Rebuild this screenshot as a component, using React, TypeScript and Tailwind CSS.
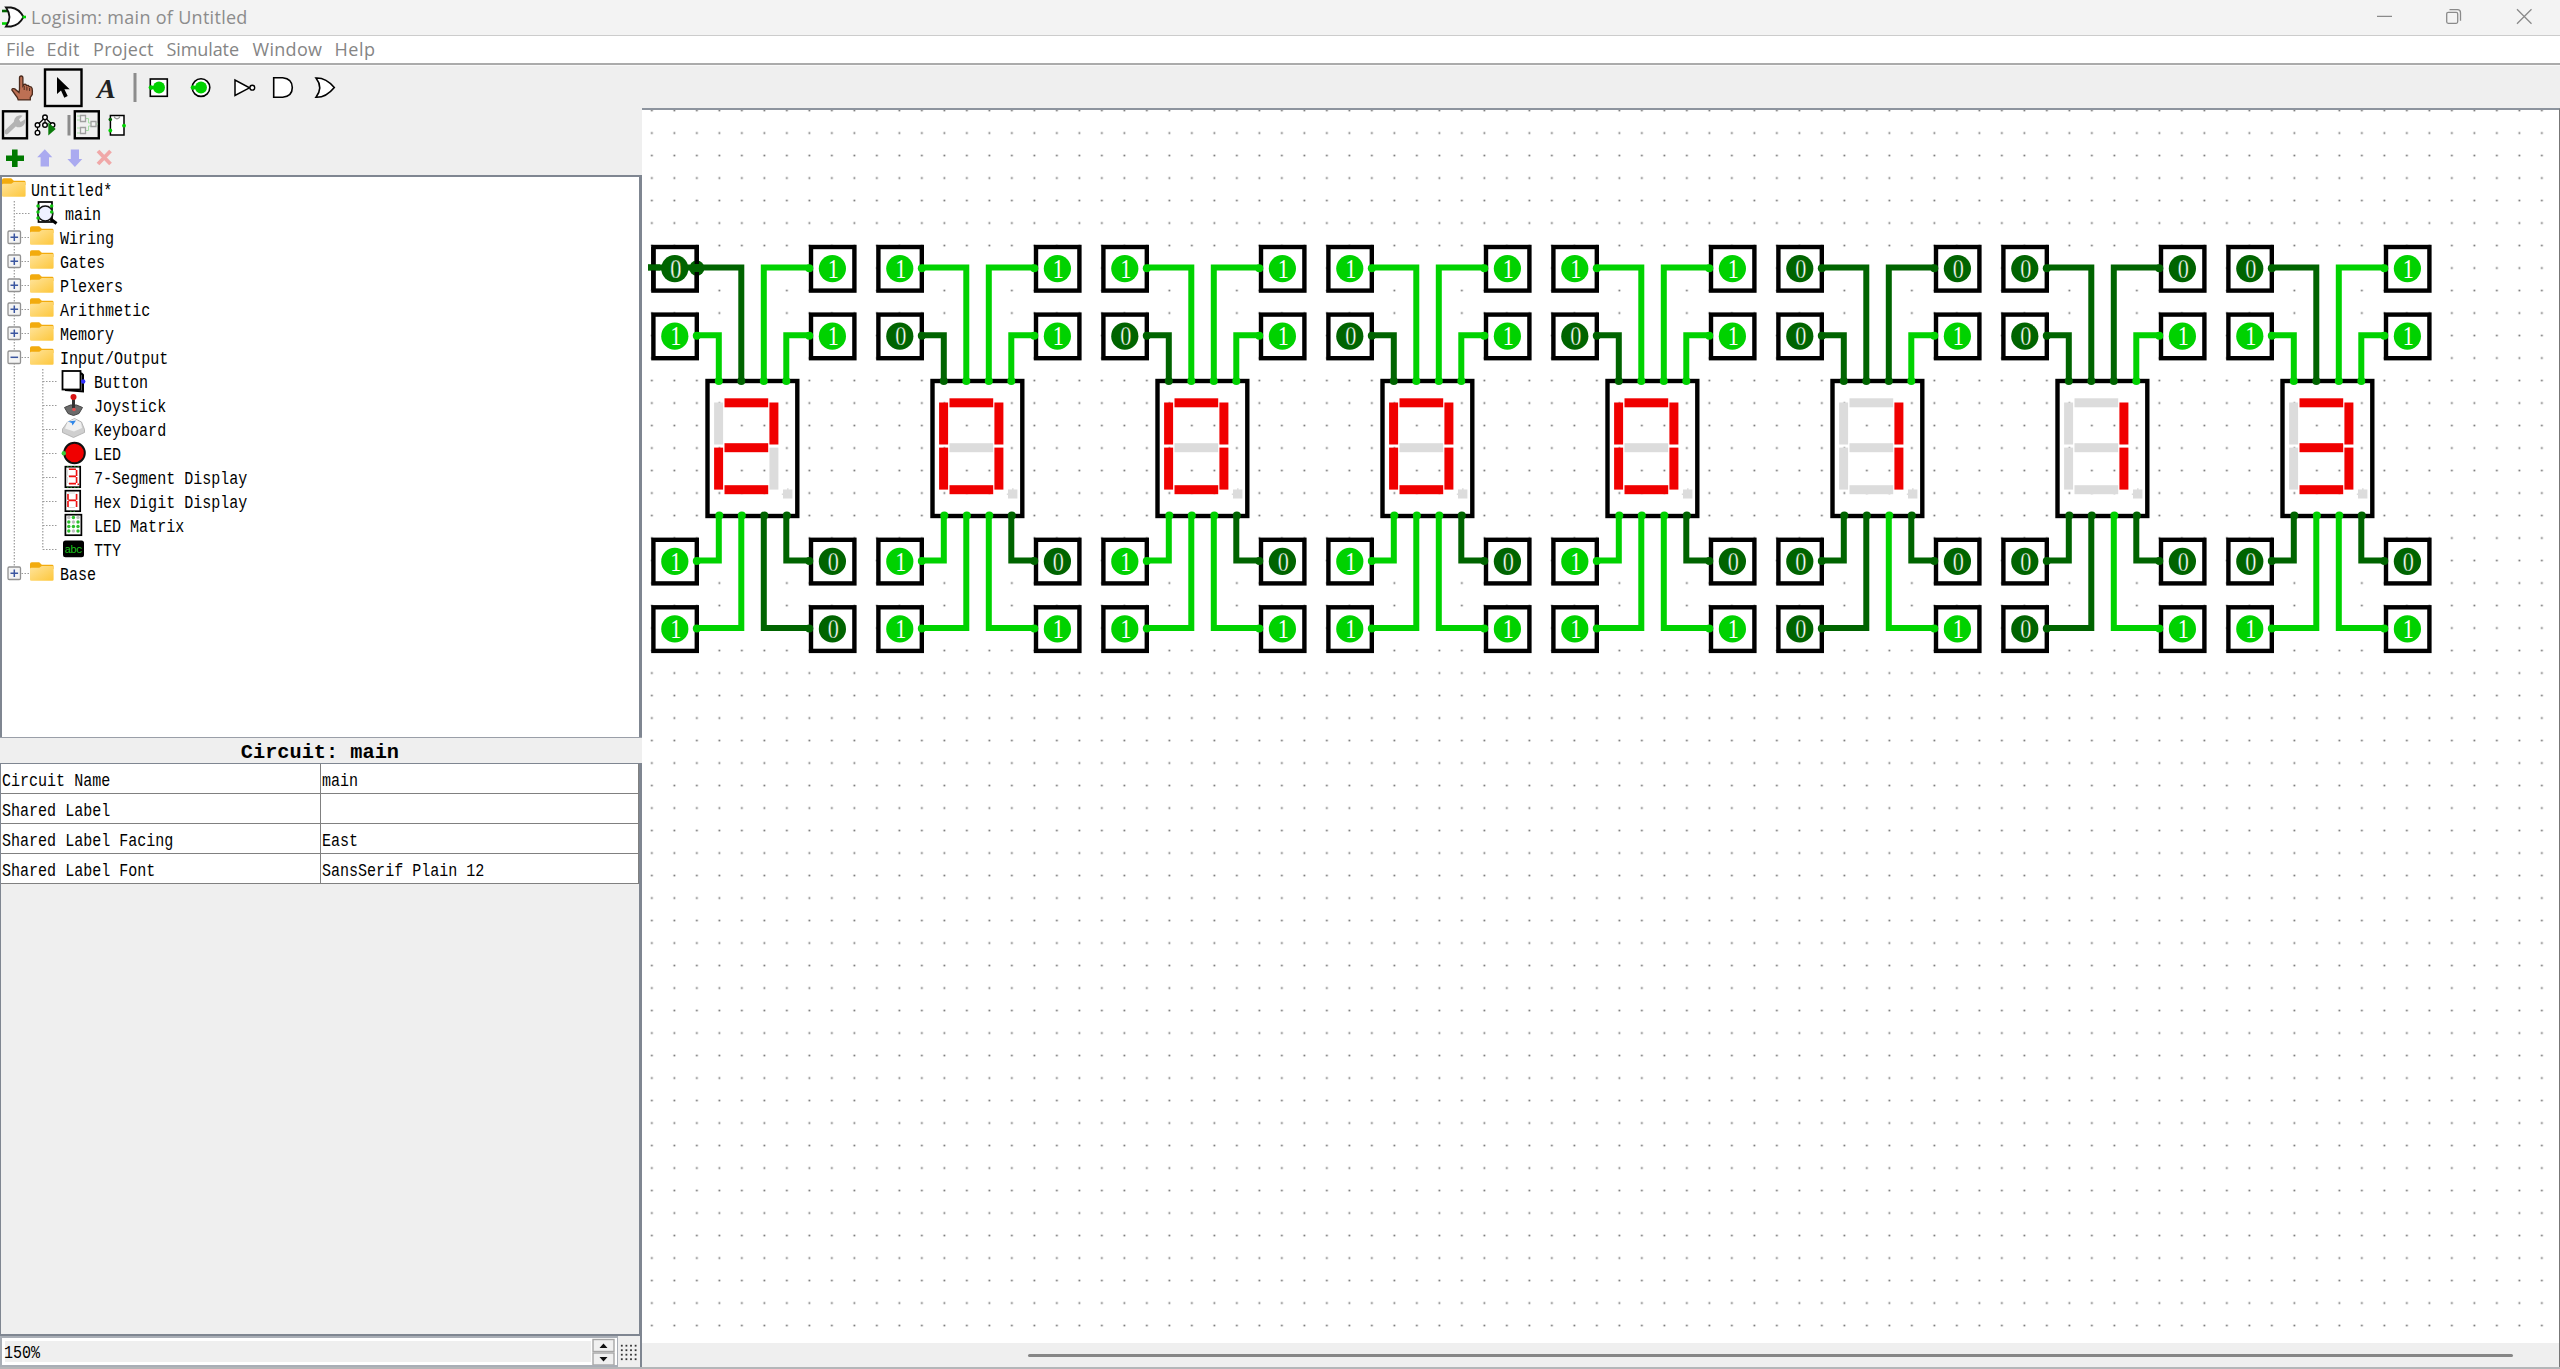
import React from "react";

type Bits = [number, number, number, number];
interface DigitData {
  left: Bits;
  right: Bits;
}

const ZERO: DigitData = { left: [1, 0, 1, 1], right: [1, 1, 0, 1] };
const ONE: DigitData = { left: [0, 0, 0, 0], right: [0, 1, 0, 1] };
const DIGITS: DigitData[] = [
  { left: [0, 1, 1, 1], right: [1, 1, 0, 0] },
  ZERO,
  ZERO,
  ZERO,
  ZERO,
  ONE,
  ONE,
  { left: [0, 1, 0, 1], right: [1, 1, 0, 1] },
];

const HIGH = "#00d200";
const LOW = "#006400";
const level = (v: number) => (v ? HIGH : LOW);
const ROWS = [268.6, 336.2, 561.4, 628.9];

function Mono({ children, className = "" }: { children: React.ReactNode; className?: string }) {
  return (
    <span
      className={`inline-block origin-left scale-x-[0.835] whitespace-pre font-['Liberation_Mono',monospace] text-[18px] leading-6 text-black ${className}`}
    >
      {children}
    </span>
  );
}

/* ---------- circuit canvas ---------- */

function PinValue({ x, y, value }: { x: number; y: number; value: number }) {
  return (
    <text
      transform={`translate(${x + 0.9} ${y + 9.2}) scale(0.84 1)`}
      textAnchor="middle"
      fontFamily="Liberation Serif"
      fontSize="26.5"
      fill="#fff"
      stroke={value ? "none" : LOW}
      strokeWidth="0.4"
    >
      {value}
    </text>
  );
}

function Pin({ x, y, value, portX, port = true }: { x: number; y: number; value: number; portX: number; port?: boolean }) {
  return (
    <g>
      <rect x={x - 21.4} y={y - 21.6} width="43.4" height="43.6" fill="#fff" stroke="#000" strokeWidth="4.4" />
      <circle cx={x} cy={y} r="13.6" fill={level(value)} />
      <PinValue x={x} y={y} value={value} />
      {port && <circle cx={portX} cy={y - 0.4} r="4" fill={level(value)} />}
    </g>
  );
}

function Wire({ d, value }: { d: string; value: number }) {
  return <path d={d} fill="none" stroke={level(value)} strokeWidth="6" />;
}

function Digit({ data, x, first }: { data: DigitData; x: number; first: boolean }) {
  const [f, g, e, d] = data.left;
  const [a, b, dp, c] = data.right;
  const seg = (v: number) => (v ? "#f00000" : "#dcdcdc");
  const tops = [
    [718.8, g],
    [741.3, f],
    [763.8, a],
    [786.3, b],
  ];
  const bottoms = [
    [719.3, e],
    [741.8, d],
    [764.3, c],
    [786.8, dp],
  ];
  return (
    <g transform={`translate(${x} 0)`}>
      {data.left.map((v, i) => (
        <Pin key={`l${i}`} x={674.8} y={ROWS[i]} value={v} portX={696.8} port={!(first && i === 0)} />
      ))}
      {data.right.map((v, i) => (
        <Pin key={`r${i}`} x={832.4} y={ROWS[i]} value={v} portX={809.3} />
      ))}
      <rect x="707.5" y="381" width="89.8" height="135" fill="none" stroke="#000" strokeWidth="4.4" />
      <rect x="724.5" y="398.3" width="43.7" height="9" fill={seg(a)} />
      <rect x="724.5" y="443.2" width="43.7" height="9" fill={seg(g)} />
      <rect x="724.5" y="485.2" width="43.7" height="9" fill={seg(d)} />
      <rect x="714.1" y="402.5" width="9" height="42" fill={seg(f)} />
      <rect x="714.1" y="447.6" width="9" height="42" fill={seg(e)} />
      <rect x="769.4" y="402.5" width="9" height="42" fill={seg(b)} />
      <rect x="769.4" y="447.6" width="9" height="42" fill={seg(c)} />
      <path d="M783 489.6h4v-1.4h1.6v1.4h3.8v9H783v-3.6h-1.2v-1.6h1.2z" fill={seg(dp)} />
      <Wire d="M696.8 267.6H741.3V381" value={f} />
      <Wire d="M696.8 335.2H718.8V381" value={g} />
      <Wire d="M809.3 267.6H763.8V381" value={a} />
      <Wire d="M809.3 335.2H786.3V381" value={b} />
      <Wire d="M696.8 560.4H718.8V516" value={e} />
      <Wire d="M696.8 627.9H741.3V516" value={d} />
      <Wire d="M809.3 560.4H786.3V516" value={dp} />
      <Wire d="M809.3 627.9H763.8V516" value={c} />
      {tops.map(([px, v]) => (
        <circle key={px} cx={px} cy="381" r="4" fill={level(v)} />
      ))}
      {bottoms.map(([px, v]) => (
        <circle key={px} cx={px} cy="515.6" r="4" fill={level(v)} />
      ))}
      {first && (
        <g>
          <path d="M648 267.4H690" stroke={LOW} strokeWidth="6" />
          <circle cx="696.8" cy="268.2" r="7.6" fill={LOW} />
          <path d="M653.4 247V290M696.8 247V264M696.8 272V290" stroke="#000" strokeWidth="4.4" />
          <path d="M648 267.4H660" stroke={LOW} strokeWidth="6" />
          <PinValue x={674.8} y={268.6} value={0} />
        </g>
      )}
    </g>
  );
}

function Canvas() {
  return (
    <svg className="block h-[1233px] w-full bg-white" viewBox="642 110 1917 1233" preserveAspectRatio="xMinYMin slice">
      <defs>
        <pattern id="grid" x="640.6" y="99.3" width="22.5" height="22.5" patternUnits="userSpaceOnUse">
          <rect x="10.4" y="10.4" width="1.7" height="1.7" fill="#6c6c6c" />
        </pattern>
      </defs>
      <rect x="642" y="110" width="1917" height="1233" fill="url(#grid)" />
      {DIGITS.map((d, i) => (
        <Digit key={i} data={d} x={i * 225} first={i === 0} />
      ))}
    </svg>
  );
}

/* ---------- toolbar ---------- */

function Art({ x, y, w, h, children }: { x: number; y: number; w: number; h: number; children: React.ReactNode }) {
  return (
    <svg className="block shrink-0" width={w} height={h} viewBox={`${x} ${y} ${w} ${h}`} fill="none">
      {children}
    </svg>
  );
}

function MainToolbar() {
  return (
    <div className="flex h-[42px] w-full bg-[#efefef]">
      <Art x={0} y={66} w={43} h={42}>
        <path
          d="M19.5 89V78q0-2 1.7-2t1.7 2v8l1.2-1.6q2-.6 2.4 1.2 2-.8 2.6 1 2.4-.4 3 1.8.6 3 .2 6l-2 3v2.5H18.2q-.4-2.4-2.4-4.4l-4-5.6q.6-2 3-1l4.2 3.5z"
          fill="#bd7054"
          stroke="#4a2a1c"
          strokeWidth="1.3"
        />
        <path d="M24.2 86v4M26.9 87v3.5M29.6 88v3" stroke="#4a2a1c" />
      </Art>
      <Art x={43} y={66} w={41} h={42}>
        <rect x="45" y="69.5" width="36.5" height="36.5" stroke="#000" strokeWidth="2.4" />
        <path d="M57 77v17l4-3.5 3.3 7.3 3.4-1.7-3.3-6.9h5.3z" fill="#000" />
      </Art>
      <Art x={84} y={66} w={46} h={42}>
        <text x="97" y="98" fontFamily="Liberation Serif" fontWeight="bold" fontStyle="italic" fontSize="28" fill="#222">
          A
        </text>
      </Art>
      <Art x={130} y={66} w={14} h={42}>
        <rect x="133.5" y="73" width="3" height="29" fill="#8c8c8c" />
      </Art>
      <Art x={144} y={66} w={41} h={42}>
        <rect x="150.3" y="79" width="17" height="17.3" fill="#fff" stroke="#000" strokeWidth="1.6" />
        <circle cx="159" cy="87.6" r="6" fill={HIGH} />
        <circle cx="151" cy="87.6" r="2.4" fill={HIGH} />
        <path d="M151 87.6h8" stroke={HIGH} strokeWidth="3" />
      </Art>
      <Art x={185} y={66} w={41} h={42}>
        <circle cx="201" cy="87.6" r="8.8" fill="#fff" stroke="#000" strokeWidth="1.6" />
        <circle cx="201" cy="87.6" r="6" fill={HIGH} />
        <circle cx="193" cy="87.6" r="2.4" fill={HIGH} />
        <path d="M193 87.6h8" stroke={HIGH} strokeWidth="3" />
      </Art>
      <Art x={226} y={66} w={41} h={42}>
        <path d="M235 80v15.5l14.5-7.7z" fill="#fff" stroke="#000" strokeWidth="1.5" />
        <circle cx="252.3" cy="87.7" r="2.4" fill="#fff" stroke="#000" strokeWidth="1.4" />
      </Art>
      <Art x={267} y={66} w={41} h={42}>
        <path d="M273.7 77.8h9q9.6 1 9.6 9.8t-9.6 9.7h-9z" fill="#fff" stroke="#000" strokeWidth="1.6" />
      </Art>
      <Art x={308} y={66} w={41} h={42}>
        <path d="M316 78q10-.4 18.3 9.5-8.3 10.2-18.3 9.8 7.4-9.8 0-19.3z" fill="#fff" stroke="#000" strokeWidth="1.6" />
      </Art>
    </div>
  );
}

function ExplorerToolbar() {
  return (
    <div className="flex h-[34px] bg-[#efefef]">
      <Art x={0} y={108} w={31} h={34}>
        <rect x="3" y="111.3" width="24" height="27" stroke="#000" strokeWidth="2.4" />
        <path d="M6.5 132l9-8.5" stroke="#b4b4b4" strokeWidth="4.5" strokeLinecap="round" />
        <path
          d="M14 124q-1-7 5-8.5 2-.5 3.5.3l-3.5 3.4 1.6 2.8 4.6-2.7q.4 5.7-3.6 7.5-3 1-5 .2z"
          fill="#b4b4b4"
        />
      </Art>
      <Art x={31} y={108} w={33} h={34}>
        <path d="M45 117.5L37.5 125v8M45 117.5v7M45 117.5l7.5 7.5" stroke="#000" strokeWidth="1.2" />
        {[
          [45, 117.3],
          [45, 125],
          [37.5, 125],
          [37.5, 132.7],
          [52.5, 125],
        ].map(([cx, cy]) => (
          <circle key={`${cx}-${cy}`} cx={cx} cy={cy} r="2.3" fill="#fff" stroke="#000" strokeWidth="1.4" />
        ))}
        <path d="M48.3 122.5v13l7.4-6.5z" fill="#0a7a0a" />
      </Art>
      <Art x={64} y={108} w={9} h={34}>
        <rect x="67.5" y="115" width="3" height="20.5" fill="#8c8c8c" />
      </Art>
      <Art x={73} y={108} w={29} h={34}>
        <rect x="74.8" y="111.3" width="24" height="27" stroke="#000" strokeWidth="2.4" />
        <path d="M77 116h4M77 120h4M77 128h4M77 133h4M86 118.5h2.5v4.5h3M86 130.5h2.5v-4.5h3M96 124h2" stroke="#a5e0a5" />
        <path d="M80.5 115.5h5v6h-5zM80.5 127.5h5v6h-5zM91 121.5h5v5h-5z" fill="#f4f4f4" stroke="#a0a0a0" strokeWidth="1.3" />
      </Art>
      <Art x={102} y={108} w={30} h={34}>
        <rect x="110.4" y="115.5" width="13.6" height="19.5" fill="#fff" stroke="#000" strokeWidth="1.5" />
        <path d="M114.5 116v1.5q2.5 2.5 5 0V116" stroke="#999" strokeWidth="1.2" />
        <circle cx="110.3" cy="119.5" r="1.8" fill="#006400" />
        <circle cx="110.3" cy="130.5" r="1.9" fill={HIGH} />
        <circle cx="124" cy="125.7" r="1.9" fill={HIGH} />
      </Art>
    </div>
  );
}

function EditToolbar() {
  return (
    <div className="flex h-[33px] bg-[#efefef]">
      <Art x={0} y={142} w={30} h={32}>
        <path d="M12 149.5h5.6v6H24v5.4h-6.4v6H12v-6H6v-5.4h6z" fill="#007a00" />
      </Art>
      <Art x={30} y={142} w={30} h={32}>
        <path d="M44.8 149.3l7.5 8H49v9.3h-8.4v-9.3h-3.4z" fill="#aaaaf0" />
      </Art>
      <Art x={60} y={142} w={30} h={32}>
        <path d="M74.9 167l7.4-8H79v-9.5h-8.2v9.5h-3.4z" fill="#aaaaf0" />
      </Art>
      <Art x={90} y={142} w={30} h={32}>
        <path d="M98 151l12.5 13M110.5 151L98 164" stroke="#f0a8a8" strokeWidth="3.8" />
      </Art>
    </div>
  );
}

/* ---------- explorer tree ---------- */

function Folder({ x }: { x: number }) {
  return (
    <g transform={`translate(${x} 0)`}>
      <path d="M0 7V3q0-1.8 1.8-1.8h7.4l2.6 2.6h10.4q1.3 0 1.3 1.3V8H0z" fill="#f2ab0e" />
      <path d="M0 8q0-1.3 1.3-1.3h8l2.5-1.8h10.5q1.3 0 1.3 1.3v12.3q0 1.2-1.3 1.2H1.3Q0 19.7 0 18.5z" fill="url(#folderFill)" />
    </g>
  );
}

const DOTS = { stroke: "#9a9a9a", strokeWidth: 1.2, strokeDasharray: "1.5 1.5" };

function Expander({ open }: { open?: boolean }) {
  return (
    <g>
      <rect x="8" y="6" width="12.5" height="12.5" rx="1.2" fill="#f4f4f4" stroke="#919191" strokeWidth="1.3" />
      <path d={open ? "M10.5 12.3h7.6" : "M10.5 12.3h7.6M14.3 8.5v7.6"} stroke="#3b56a0" strokeWidth="1.5" />
    </g>
  );
}

const SEG_PATHS = (
  <path d="M68 4h7M68 11h7M68 18.5h7M67.3 4.5v6M67.3 12v6M76.3 4.5v6M76.3 12v6" stroke="#d8d8d8" strokeWidth="1.2" />
);

const toolArt: Record<string, React.ReactNode> = {
  Button: (
    <g>
      <path d="M65 21l18 1.5V6l-2-2" fill="#999" stroke="#000" strokeWidth="2" />
      <rect x="62.5" y="2" width="18" height="18.5" fill="#fff" stroke="#000" strokeWidth="1.8" />
      <circle cx="83.2" cy="12.5" r="2.2" fill="#3333ff" />
    </g>
  ),
  Joystick: (
    <g>
      <path d="M64.5 14.5l6-2.5h6l6 2.5-3.5 6-5.5 2-5.5-2z" fill="#6b6b6b" stroke="#444" />
      <path d="M72 5h3v10h-3z" fill="#333" />
      <circle cx="73.5" cy="4" r="3" fill="#d81414" />
      <circle cx="74" cy="16.5" r="1.8" fill="#e05050" />
    </g>
  ),
  Keyboard: (
    <g>
      <path d="M62.5 12l5-7 7-3.5 7 3.5 3 7.5v3l-11 5-11-5z" fill="#cfcfcf" stroke="#aaa" strokeWidth=".8" />
      <path d="M67.5 5l7-3 6.5 3.5 1 5.5-8 3.5-9-3z" fill="#f0f0f0" />
      <path d="M68 4.5l8-1-3.5 5-.8-2.5z" fill="#2f86e8" />
    </g>
  ),
  LED: (
    <g>
      <circle cx="74.5" cy="12" r="10.3" fill="#f00000" stroke="#111" strokeWidth="2" />
      <circle cx="63.8" cy="12.3" r="2.2" fill="#3ccc3c" />
    </g>
  ),
  "7-Segment Display": (
    <g>
      <rect x="65.4" y="1.7" width="14.8" height="20.5" fill="#fff" stroke="#000" strokeWidth="1.7" />
      {SEG_PATHS}
      <path d="M69 4.2h7M69 11.4h7M69 18.6h7M76.6 5v6M76.6 12v6" stroke="#f01010" strokeWidth="1.6" />
      <path d="M67 1.5h12M67 22.5h12" stroke="#1a7a1a" strokeDasharray="1.5 2" />
      <rect x="77.5" y="18.5" width="1.6" height="1.6" fill="#f01010" />
    </g>
  ),
  "Hex Digit Display": (
    <g>
      <rect x="65.4" y="1.7" width="14.8" height="20.5" fill="#fff" stroke="#000" strokeWidth="1.7" />
      {SEG_PATHS}
      <path d="M68.5 11.4h7.6M68 5v5.7M68 12v6M76.6 5v5.7M76.6 12v6" stroke="#f01010" strokeWidth="1.6" />
      <path d="M70 22.5h6" stroke="#1a7a1a" strokeDasharray="1.5 2" />
    </g>
  ),
  "LED Matrix": (
    <g>
      <rect x="65.4" y="1.7" width="16" height="20.5" fill="#fff" stroke="#000" strokeWidth="1.7" />
      {[4.5, 9, 13.5, 18].map((y, r) =>
        [68.8, 73.4, 78].map((x, c) => (
          <circle
            key={`${x}${y}`}
            cx={x}
            cy={y}
            r="1.7"
            fill={(r === 0 && c !== 1) || (r === 1 && c === 1) || (r === 3 && c === 1) ? "#bdbdbd" : "#2ebf2e"}
          />
        )),
      )}
    </g>
  ),
  TTY: (
    <g>
      <rect x="63" y="3.5" width="21" height="16.8" rx="2.5" fill="#000" />
      <text x="64.6" y="15.6" fontFamily="Liberation Mono" fontSize="11" fill="#1cc01c" textLength="18">
        abc
      </text>
    </g>
  ),
};

function TreeRow({ label, indent, children }: { label: string; indent: number; children: React.ReactNode }) {
  return (
    <div className="flex h-6 items-center">
      <svg className="block shrink-0 overflow-visible" width={indent} height="24" viewBox={`0 0 ${indent} 24`} fill="none">
        {children}
      </svg>
      <Mono className="translate-y-[2px]">{label}</Mono>
    </div>
  );
}

function FolderRow({ label, open, last }: { label: string; open?: boolean; last?: boolean }) {
  return (
    <TreeRow label={label} indent={59.5}>
      <path d={last ? "M14.3 0v6" : "M14.3 0v24"} {...DOTS} />
      <path d="M21.5 12.5H31" {...DOTS} />
      <Expander open={open} />
      <Folder x={30} />
    </TreeRow>
  );
}

function Tree() {
  return (
    <div className="h-[562px] border-l-2 border-r-[3px] border-t-2 border-[#7f8691] bg-white">
      <div className="-ml-[2px]">
        <svg className="absolute" width="0" height="0">
          <defs>
            <linearGradient id="folderFill" x1="0" y1="0" x2="1" y2="1">
              <stop offset="0" stopColor="#ffe49c" />
              <stop offset="1" stopColor="#fdc73c" />
            </linearGradient>
          </defs>
        </svg>
        <TreeRow label="Untitled*" indent={31}>
          <Folder x={2} />
        </TreeRow>
        <TreeRow label="main" indent={64.5}>
          <path d="M14.3 0v24M16 12.5H30" {...DOTS} />
          <rect x="38.5" y="1" width="13.5" height="20" fill="#fff" stroke="#000" strokeWidth="1.7" />
          <circle cx="45.3" cy="12.5" r="7.5" fill="#eef0ff" stroke="#111" strokeWidth="1.6" />
          <path d="M50.5 18l6 4.5" stroke="#000" strokeWidth="3.2" />
          {[
            [38, 5],
            [38, 11],
            [38, 17],
            [51.7, 5],
            [51.7, 11],
          ].map(([cx, cy]) => (
            <circle key={`${cx}${cy}`} cx={cx} cy={cy} r="1.7" fill="#0cc40c" />
          ))}
        </TreeRow>
        {["Wiring", "Gates", "Plexers", "Arithmetic", "Memory"].map((l) => (
          <FolderRow key={l} label={l} />
        ))}
        <FolderRow label="Input/Output" open />
        {Object.keys(toolArt).map((l) => (
          <TreeRow key={l} label={l} indent={94}>
            <path d={l === "TTY" ? "M14.3 0v24M42.8 0v12.5" : "M14.3 0v24M42.8 0v24"} {...DOTS} />
            <path d="M43 12.5H58" {...DOTS} />
            {toolArt[l]}
          </TreeRow>
        ))}
        <FolderRow label="Base" last />
      </div>
    </div>
  );
}

/* ---------- attribute table ---------- */

const ATTRS = [
  ["Circuit Name", "main"],
  ["Shared Label", ""],
  ["Shared Label Facing", "East"],
  ["Shared Label Font", "SansSerif Plain 12"],
];

function AttributeTable() {
  return (
    <div className="flex h-[599px] flex-col">
      <div className="flex h-[26px] items-center justify-center border-t border-[#9a9fa8] bg-[#efefef] pr-[3px]">
        <span className="inline-block scale-x-[0.965] translate-y-[1.5px] font-['Liberation_Mono',monospace] text-[21px] font-bold leading-6 text-black">
          Circuit: main
        </span>
      </div>
      <div className="flex-1 border-l border-r-[3px] border-t border-b-2 border-[#7f8691] bg-[#efefef]">
        {ATTRS.map(([k, v]) => (
          <div key={k} className="flex h-[30px] border-b border-[#808080] bg-white">
            <div className="w-[320px] overflow-hidden border-r border-[#808080] pl-px pt-1">
              <Mono>{k}</Mono>
            </div>
            <div className="flex-1 border-r border-[#808080] pl-px pt-1">
              <Mono>{v}</Mono>
            </div>
          </div>
        ))}
      </div>
    </div>
  );
}

function ZoomBar() {
  return (
    <div className="flex h-[31px] border-r-2 border-[#7f8691] bg-[#efefef]">
      <div className="flex w-[617px] border-2 border-r-0 border-[#a9aeb6] bg-white p-[3px] pr-0">
        <div className="flex-1 bg-[#efefef] leading-none">
          <Mono className="-ml-px">150%</Mono>
        </div>
        <svg className="-my-[3px] block" width="26" height="27" viewBox="591 1338 26 27">
          <rect x="593" y="1339.5" width="21" height="12" fill="#f0f0f0" stroke="#a6a6a6" strokeWidth="1.4" />
          <rect x="593" y="1353" width="21" height="12" fill="#f0f0f0" stroke="#a6a6a6" strokeWidth="1.4" />
          <path d="M599.5 1348h8l-4-4.5zM599.5 1357h8l-4 4.5z" fill="#111" />
        </svg>
      </div>
      <div className="w-px bg-[#a9aeb6]" />
      <svg className="block" width="22" height="31" viewBox="618 1336 22 31">
        {[1345.7, 1350.2, 1354.7, 1359.2].map((y) =>
          [621.8, 626.4, 631, 635.6].map((x) => <rect key={`${x}${y}`} x={x - 0.9} y={y - 0.9} width="1.8" height="1.8" fill="#333" />),
        )}
      </svg>
    </div>
  );
}

const MENUS: [string, string][] = [
  ["File", "w-[40.5px] tracking-[0.1px]"],
  ["Edit", "w-[46.5px] tracking-[0.3px]"],
  ["Project", "w-[73.5px] tracking-[0.3px]"],
  ["Simulate", "w-[86px] tracking-[-0.1px]"],
  ["Window", "w-[82px] tracking-[0.3px]"],
  ["Help", "w-[60px] tracking-[0.5px]"],
];

export default function App() {
  return (
    <div className="flex h-[1369px] w-[2560px] flex-col overflow-hidden bg-[#efefef]">
      <header className="flex h-[36px] items-center border-b border-[#cccccc] bg-[#f3f3f3]">
        <svg className="block shrink-0" width="31" height="35" viewBox="0 0 31 35" fill="none">
          <path d="M2 11h7" stroke={LOW} strokeWidth="2.6" />
          <path d="M2 23.5h7" stroke={HIGH} strokeWidth="2.6" />
          <path d="M6 7.5h5q8 1 12.5 9.5-4.5 8.5-12.5 9.5H6q7-9.5 0-19z" fill="#fff" stroke="#111" strokeWidth="1.8" />
          <path d="M22.5 17H26" stroke={HIGH} strokeWidth="2.6" />
        </svg>
        <span className="-translate-y-px font-['Open_Sans',sans-serif] text-[18px] leading-none tracking-[0.29px] text-[#8c8c8c]">
          Logisim: main of Untitled
        </span>
        <svg className="ml-auto block" width="190" height="35" viewBox="2370 0 190 35" fill="none" stroke="#8a8a8a" strokeWidth="1.3">
          <path d="M2377 16.3h15M2517 9.3l14.5 14.5M2531.5 9.3L2517 23.8" />
          <rect x="2446.7" y="12.3" width="11" height="11" rx="1.5" />
          <path d="M2449.5 9.7h8q3 0 3 3v8" />
        </svg>
      </header>
      <nav className="flex h-[29px] items-center border-b-2 border-[#ababab] bg-white pb-[2px] pl-[6px] font-['Open_Sans',sans-serif] text-[18px] leading-none text-[#858585]">
        {MENUS.map(([m, c]) => (
          <span key={m} className={`shrink-0 ${c}`}>
            {m}
          </span>
        ))}
      </nav>
      <div className="h-px bg-[#f8f8f8]" />
      <div className="h-[42px]">
        <MainToolbar />
      </div>
      <div className="flex h-[1259px]">
        <aside className="flex w-[642px] shrink-0 flex-col">
          <ExplorerToolbar />
          <EditToolbar />
          <Tree />
          <AttributeTable />
          <ZoomBar />
        </aside>
        <main className="flex w-[1918px] flex-col border-r border-t-2 border-r-[#777] border-t-[#8d949e]">
          <Canvas />
          <div className="flex h-[24px] items-center bg-[#efefef]">
            <div className="ml-[386px] h-[3px] w-[1485px] rounded-full bg-[#868686]" />
          </div>
        </main>
      </div>
      <div className="h-[2px] bg-[#b4b6b8]" />
    </div>
  );
}
